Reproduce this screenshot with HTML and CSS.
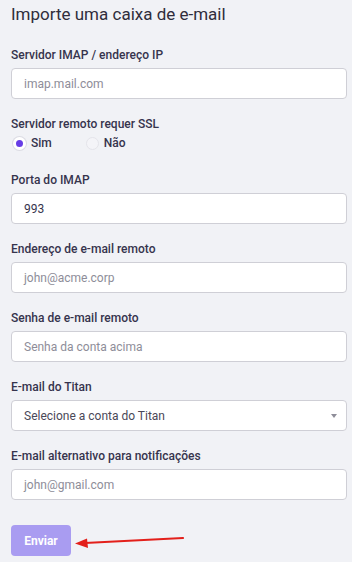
FILE: index.html
```html
<!DOCTYPE html>
<html lang="pt-BR">
<head>
    <meta charset="UTF-8">
    <title>Importe uma caixa de e-mail</title>
    <link rel="stylesheet" href="styles.css">
</head>
<body>
    <div class="panel">
        <h2 class="title">Importe uma caixa de e-mail</h2>

        <div class="field">
            <label class="label">Servidor IMAP / endereço IP</label>
            <div class="input placeholder">imap.mail.com</div>
        </div>

        <div class="field">
            <label class="label">Servidor remoto requer SSL</label>
            <div class="radios">
                <span class="radio"><span class="dot checked"></span>Sim</span>
                <span class="radio"><span class="dot"></span>Não</span>
            </div>
        </div>

        <div class="field">
            <label class="label">Porta do IMAP</label>
            <div class="input">993</div>
        </div>

        <div class="field">
            <label class="label">Endereço de e-mail remoto</label>
            <div class="input placeholder">john@acme.corp</div>
        </div>

        <div class="field">
            <label class="label">Senha de e-mail remoto</label>
            <div class="input placeholder">Senha da conta acima</div>
        </div>

        <div class="field">
            <label class="label">E-mail do Titan</label>
            <div class="input select">
                <span>Selecione a conta do Titan</span>
                <span class="caret"></span>
            </div>
        </div>

        <div class="field">
            <label class="label">E-mail alternativo para notificações</label>
            <div class="input placeholder">john@gmail.com</div>
        </div>

        <div class="actions">
            <button class="submit">Enviar</button>
            <!-- seta de destaque -->
            <svg class="pointer" width="120" height="20" viewBox="0 0 120 20">
                <line x1="12" y1="10" x2="110" y2="5" stroke="#e3201b" stroke-width="2.2" stroke-linecap="round"/>
                <polygon points="2,10.5 14,5.5 15,15" fill="#e3201b"/>
            </svg>
        </div>
    </div>
</body>
</html>
```

FILE: styles.css
```css
body {
    margin: 0;
    background-color: #fff;
    font-family: Roboto, "Liberation Sans", sans-serif;
    color: #36344d;
}
.panel {
    width: 352px;
    height: 562px;
    box-sizing: border-box;
    background-color: #f1f2f6;
    padding: 4px 5px 0 11px;
}
.title {
    margin: 0 0 23px;
    font-size: 17px;
    line-height: 20px;
    font-weight: 400;
    color: #2f2d3c;
}
.field {
    display: flex;
    flex-direction: column;
    gap: 5px;
    margin-bottom: 17px;
}
.label {
    font-size: 12px;
    line-height: 16px;
    font-weight: 500;
    color: #36344d;
}
.input {
    height: 31px;
    box-sizing: border-box;
    background-color: #fff;
    border: 1px solid #cfcfd6;
    border-radius: 4px;
    padding: 0 12px;
    display: flex;
    align-items: center;
    font-size: 12px;
    color: #36344d;
}
.placeholder {
    color: #8e8d99;
}
.select {
    justify-content: space-between;
    color: #4a4858;
}
.caret {
    width: 0;
    height: 0;
    border-left: 3.5px solid transparent;
    border-right: 3.5px solid transparent;
    border-top: 4px solid #8e8d99;
    margin-right: -3px;
}
.radios {
    display: flex;
    gap: 32px;
    height: 16px;
    align-items: center;
    margin: -2px 0 4px;
}
.radio {
    display: flex;
    align-items: center;
    gap: 5px;
    font-size: 12px;
    font-weight: 500;
    color: #36344d;
}
.dot {
    width: 13px;
    height: 13px;
    box-sizing: border-box;
    border-radius: 50%;
    background-color: #f4f4f8;
    border: 1px solid #e4e4ea;
    margin-left: 2px;
}
.dot.checked {
    background-color: #673de6;
    border: 3px solid #fff;
    box-shadow: 0 0 0 1px #dcdce4;
}
.actions {
    position: relative;
    margin-top: 25px;
}
.submit {
    width: 60px;
    height: 31px;
    border: none;
    border-radius: 4px;
    background-color: #a99cf1;
    color: #fff;
    font-family: Roboto, "Liberation Sans", sans-serif;
    font-size: 12px;
    font-weight: 700;
}
.pointer {
    position: absolute;
    left: 62px;
    top: 8px;
}
```
